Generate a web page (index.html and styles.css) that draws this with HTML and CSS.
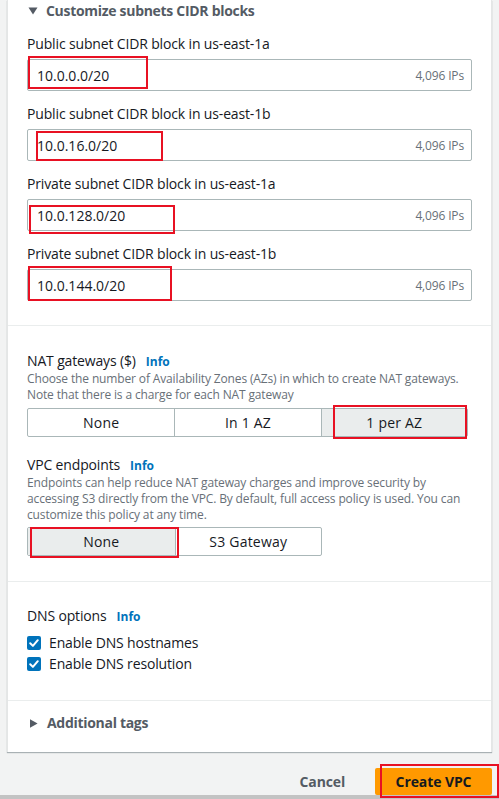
FILE: index.html
```html
<!DOCTYPE html>
<html lang="en">
<head>
<meta charset="utf-8">
<title>Create VPC</title>
<link rel="stylesheet" href="styles.css">
</head>
<body>
<div class="page">
  <div class="panel">
    <div class="section cidr">
      <div class="expander">
        <svg class="caret" width="10" height="8" viewBox="0 0 10 8"><path d="M0.5 0.5 H9.5 L5 7.5 Z" fill="#545b64"/></svg>
        <span>Customize subnets CIDR blocks</span>
      </div>
      <div class="field first">
        <div class="label">Public subnet CIDR block in us-east-1a</div>
        <div class="input">
          <span class="value">10.0.0.0/20</span><span class="ips">4,096 IPs</span>
          <span class="mark m1"></span>
        </div>
      </div>
      <div class="field">
        <div class="label">Public subnet CIDR block in us-east-1b</div>
        <div class="input">
          <span class="value">10.0.16.0/20</span><span class="ips">4,096 IPs</span>
          <span class="mark m2"></span>
        </div>
      </div>
      <div class="field">
        <div class="label">Private subnet CIDR block in us-east-1a</div>
        <div class="input">
          <span class="value">10.0.128.0/20</span><span class="ips">4,096 IPs</span>
          <span class="mark m3"></span>
        </div>
      </div>
      <div class="field">
        <div class="label">Private subnet CIDR block in us-east-1b</div>
        <div class="input">
          <span class="value">10.0.144.0/20</span><span class="ips">4,096 IPs</span>
          <span class="mark m4"></span>
        </div>
      </div>
    </div>

    <div class="section opts">
      <div class="label">NAT gateways ($) <a class="info">Info</a></div>
      <div class="desc">Choose the number of Availability Zones (AZs) in which to create NAT gateways. Note that there is a charge for each NAT gateway</div>
      <div class="seg seg3">
        <div class="opt">None</div>
        <div class="opt">In 1 AZ</div>
        <div class="opt on">1 per AZ</div>
        <span class="mark m5"></span>
      </div>

      <div class="label sub">VPC endpoints <a class="info">Info</a></div>
      <div class="desc">Endpoints can help reduce NAT gateway charges and improve security by accessing S3 directly from the VPC. By default, full access policy is used. You can customize this policy at any time.</div>
      <div class="seg seg2">
        <div class="opt on">None</div>
        <div class="opt">S3 Gateway</div>
        <span class="mark m6"></span>
      </div>
    </div>

    <div class="section dns">
      <div class="label">DNS options <a class="info">Info</a></div>
      <label class="check first">
        <svg width="14" height="14" viewBox="0 0 14 14"><rect x="0" y="0" width="14" height="14" rx="2" fill="#0073bb"/><path d="M3.2 7.2 L5.9 9.9 L10.8 4.2" fill="none" stroke="#fff" stroke-width="2" stroke-linecap="round" stroke-linejoin="round"/></svg>
        <span>Enable DNS hostnames</span>
      </label>
      <label class="check">
        <svg width="14" height="14" viewBox="0 0 14 14"><rect x="0" y="0" width="14" height="14" rx="2" fill="#0073bb"/><path d="M3.2 7.2 L5.9 9.9 L10.8 4.2" fill="none" stroke="#fff" stroke-width="2" stroke-linecap="round" stroke-linejoin="round"/></svg>
        <span>Enable DNS resolution</span>
      </label>
    </div>

    <div class="section tags">
      <div class="expander">
        <svg class="caret" width="10" height="9" viewBox="0 0 10 9"><path d="M1 0.2 L8.6 4.5 L1 8.8 Z" fill="#545b64"/></svg>
        <span>Additional tags</span>
      </div>
    </div>
  </div>

  <div class="footer">
    <a class="cancel">Cancel</a>
    <div class="create-wrap">
      <button class="create">Create VPC</button>
      <span class="mark m7"></span>
    </div>
  </div>
  <div class="bottombar"></div>
</div>
</body>
</html>
```

FILE: styles.css
```css
html, body {
  margin: 0;
  padding: 0;
}
body {
  background: #f2f3f3;
  font-family: "Open Sans", "Noto Sans", sans-serif;
  color: #16191f;
  font-size: 14px;
  letter-spacing: -0.15px;
}
.page {
  width: 499px;
  height: 799px;
  overflow: hidden;
  display: flex;
  flex-direction: column;
}
.panel {
  margin-left: 7px;
  width: 485px;
  box-sizing: border-box;
  background: #fff;
  border-left: 1px solid #e4e6e6;
  border-right: 1px solid #e4e6e6;
  box-shadow: 0 1px 1px 0 rgba(0, 28, 36, 0.3);
}
.section {
  padding: 0 19px 24px 19px;
}
.section + .section {
  border-top: 1px solid #eaeded;
}
.expander {
  display: flex;
  align-items: center;
  height: 21px;
  line-height: 21px;
  font-weight: 700;
  color: #545b64;
  font-size: 14px;
  letter-spacing: -0.3px;
}
.caret {
  margin-left: 1px;
  margin-right: 8px;
  flex: none;
}
.label {
  height: 20px;
  line-height: 20px;
  font-size: 14px;
  color: #16191f;
  display: flex;
  align-items: baseline;
}
.field {
  margin-top: 13px;
}
.input {
  position: relative;
  margin-top: 5px;
  height: 32px;
  box-sizing: border-box;
  border: 1px solid #aab7b8;
  border-radius: 2px;
  display: flex;
  align-items: center;
  justify-content: space-between;
  padding: 0 7px 0 9px;
}
.value {
  font-size: 14px;
  color: #16191f;
  letter-spacing: 0;
}
.ips {
  font-size: 12px;
  color: #687078;
}
.mark {
  position: absolute;
  border: 2px solid #e81123;
  box-sizing: border-box;
  z-index: 5;
  pointer-events: none;
}
.m1 { left: 0; top: -4px; width: 120px; height: 33px; }
.m2 { left: 8px; top: 1px; width: 127px; height: 30px; }
.m3 { left: 1px; top: 5px; width: 146px; height: 29px; }
.m4 { left: 0; top: -4px; width: 144px; height: 35px; }
.m5 { left: 305px; top: -4px; width: 134px; height: 34px; }
.m6 { left: 2px; top: -1px; width: 149px; height: 31px; }
.m7 { left: 5px; top: -4px; width: 119px; height: 34px; }

.section.opts {
  padding-top: 25px;
  padding-bottom: 25px;
}
.info {
  font-size: 12px;
  line-height: 20px;
  font-weight: 700;
  color: #0073bb;
  margin-left: 10px;
  letter-spacing: 0;
}
.desc {
  font-size: 12px;
  line-height: 16px;
  color: #687078;
  letter-spacing: -0.14px;
}
.seg {
  position: relative;
  display: grid;
  margin-top: 5px;
  height: 29px;
  box-sizing: border-box;
  border: 1px solid #aab7b8;
  border-radius: 2px;
}
.seg3 {
  width: 441px;
  grid-template-columns: 1fr 1fr 1fr;
}
.seg2 {
  width: 295px;
  margin-top: 4px;
  grid-template-columns: 1fr 1fr;
}
.opt {
  display: flex;
  align-items: center;
  justify-content: center;
  font-size: 14px;
  color: #16191f;
  letter-spacing: 0.2px;
}
.opt + .opt {
  border-left: 1px solid #aab7b8;
}
.opt.on {
  background: #eaeded;
}
.label.sub {
  margin-top: 18px;
}

.section.dns {
  padding-top: 24px;
  padding-bottom: 26px;
}
.check {
  display: flex;
  align-items: center;
  height: 21px;
  line-height: 21px;
  font-size: 14px;
  color: #16191f;
}
.check.first {
  margin-top: 6px;
}
.check svg {
  margin-right: 8px;
  flex: none;
}

.section.tags {
  padding-top: 11px;
  padding-bottom: 18px;
}
.tags .expander {
  height: 22px;
  line-height: 22px;
}
.tags .caret {
  margin-left: 2px;
}

.footer {
  margin-top: 16px;
  display: flex;
  justify-content: flex-end;
  align-items: center;
  padding-right: 7px;
  height: 27px;
  flex: none;
}
.cancel {
  font-weight: 700;
  color: #545b64;
  font-size: 14px;
  margin-right: 30px;
}
.create-wrap {
  position: relative;
}
.create {
  display: block;
  width: 117px;
  height: 27px;
  border: none;
  border-radius: 2px;
  background: #ff9900;
  color: #16191f;
  font-family: inherit;
  font-weight: 700;
  font-size: 14px;
  letter-spacing: -0.1px;
  padding: 0;
}
.bottombar {
  margin-top: auto;
  height: 5px;
  flex: none;
  background: #c3c3c3;
}
```
